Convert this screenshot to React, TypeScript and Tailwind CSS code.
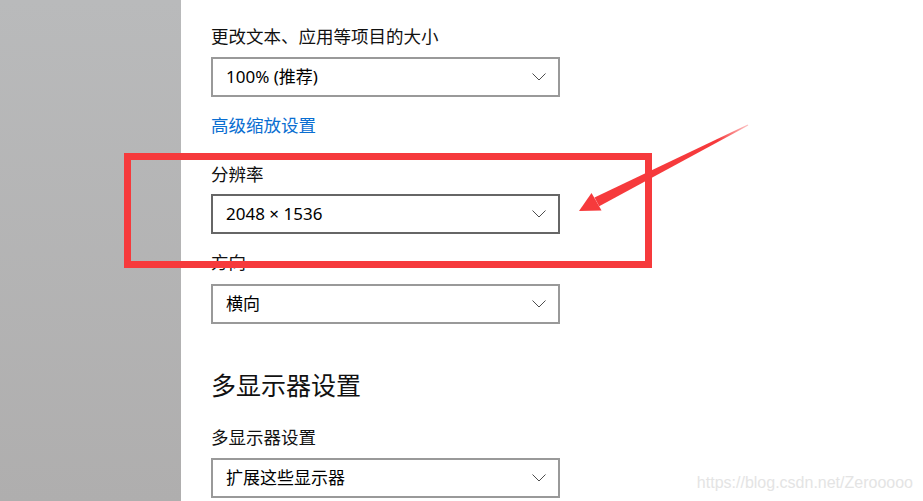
import { ReactNode } from 'react';

const font = { fontFamily: '"Noto Sans", "Noto Sans CJK SC", sans-serif' };

function Chevron() {
  return (
    <svg width="14" height="8" viewBox="0 0 14 8" fill="none" className="shrink-0">
      <path d="M0.5 0.5 L7 7 L13.5 0.5" stroke="#4d4d4d" strokeWidth="1" />
    </svg>
  );
}

function Select({ children, active = false, className = '' }: { children: ReactNode; active?: boolean; className?: string }) {
  return (
    <div
      className={
        'flex h-[40px] w-[349px] items-center justify-between pl-[13px] pr-[12px] text-[17px] text-black ' +
        (active ? 'border-2 border-[#666666] ' : 'border-2 border-[#999999] ') +
        className
      }
    >
      <span className="leading-6">{children}</span>
      <Chevron />
    </div>
  );
}

export default function App() {
  return (
    <div className="relative flex h-[501px] w-[923px] overflow-hidden bg-white" style={font}>
      {/* left nav area (blurred) */}
      <div className="h-full w-[181px] shrink-0 bg-linear-to-b from-[#b9babb] to-[#afaeae]" />

      {/* settings content */}
      <div className="flex flex-col pl-[30px] pt-[24px]">
        <div className="h-6 text-[17.5px] leading-6 text-[#111]">更改文本、应用等项目的大小</div>
        <Select className="mt-[9px]">100% (推荐)</Select>
        <div className="mt-[16px] h-6 text-[17.5px] leading-6 text-[#0a6ed1]">高级缩放设置</div>

        <div className="mt-[25px] h-6 text-[17.5px] leading-6 text-[#111]">分辨率</div>
        <Select active className="mt-[8px]">2048 × 1536</Select>

        <div className="mt-[16px] h-6 text-[17.5px] leading-6 text-[#111]">方向</div>
        <Select className="mt-[10px]">横向</Select>

        <div className="mt-[44px] h-[34px] text-[25px] leading-[34px] text-[#111]">多显示器设置</div>

        <div className="mt-[23px] h-6 text-[17.5px] leading-6 text-[#111]">多显示器设置</div>
        <Select className="mt-[9px]">扩展这些显示器</Select>
      </div>

      {/* red annotation box */}
      <div className="absolute left-[124px] top-[153px] h-[115px] w-[528px] border-[7px] border-[#f63a3c]" />

      {/* red arrow */}
      <svg className="absolute left-0 top-0" width="923" height="501" viewBox="0 0 923 501">
        <defs>
          <linearGradient id="shaft" x1="748" y1="125" x2="597" y2="202" gradientUnits="userSpaceOnUse">
            <stop offset="0" stopColor="#f63a3c" stopOpacity="0.3" />
            <stop offset="0.2" stopColor="#f63a3c" stopOpacity="1" />
            <stop offset="1" stopColor="#f63a3c" stopOpacity="1" />
          </linearGradient>
        </defs>
        <polygon points="748.3,125.6 747.7,124.4 594.5,197.6 599.2,206.2" fill="url(#shaft)" />
        <polygon points="579,211 591.5,193 596.5,201.5 601.5,210.5" fill="#f63a3c" />
      </svg>

      {/* watermark */}
      <div
        className="absolute bottom-[8px] right-[10px] text-[16px] leading-5 text-[#e4e4e4]"
        style={{ fontFamily: '"Liberation Sans", Arial, sans-serif' }}
      >
        https://blog.csdn.net/Zerooooo
      </div>
    </div>
  );
}
